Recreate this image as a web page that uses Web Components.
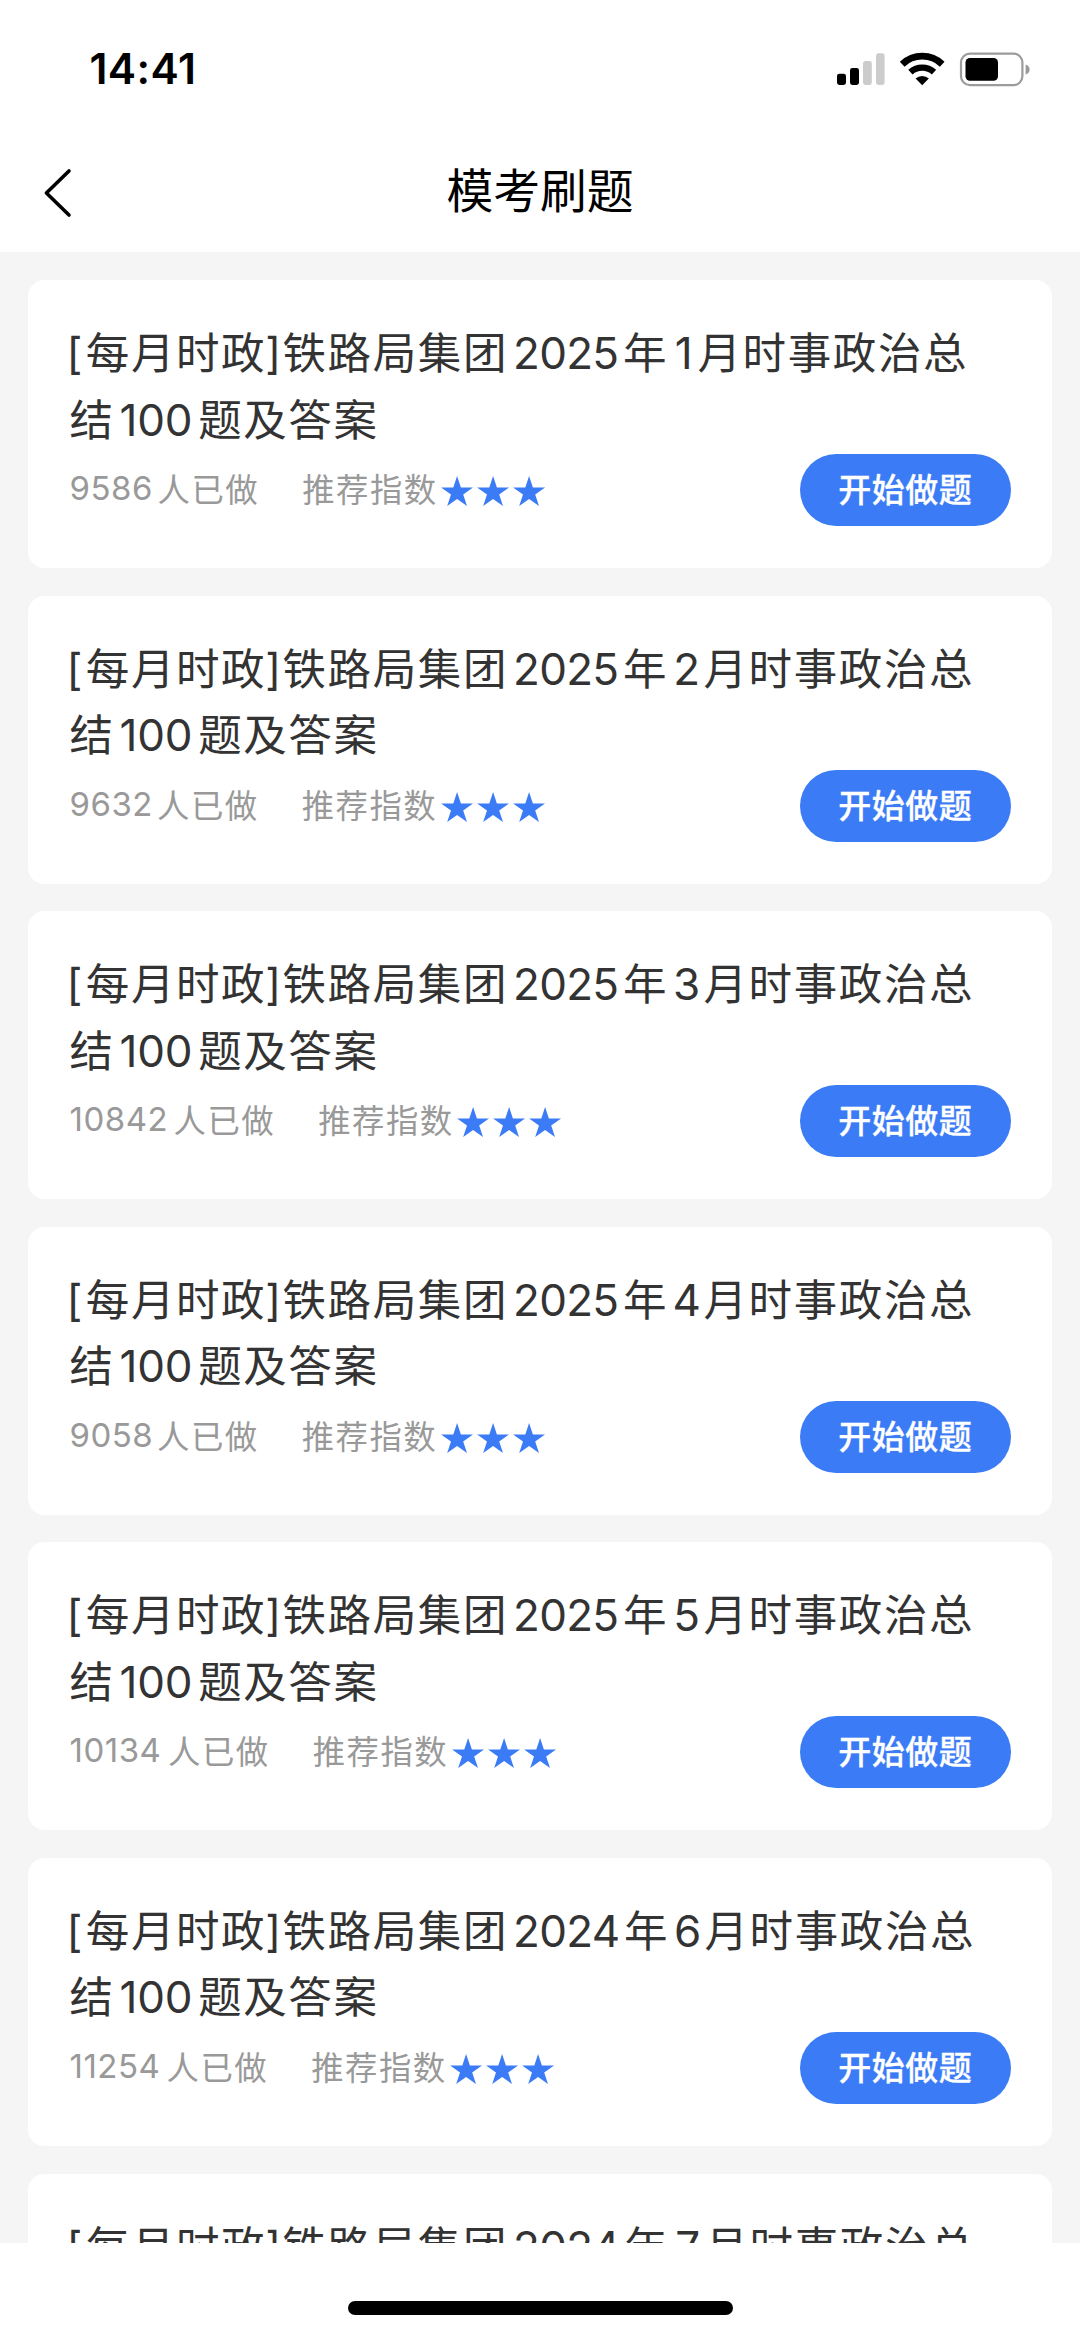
<!DOCTYPE html>
<html lang="zh-CN">
<head>
<meta charset="utf-8">
<title>模考刷题</title>
<style>
html,body{margin:0;padding:0;height:2337px;overflow:hidden;background:#fff}
body{font-family:Inter,"Noto Sans CJK SC",sans-serif}
</style>
</head>
<body>
<mock-exam-app></mock-exam-app>
<script>
const define = (name, html) => customElements.define(name, class extends HTMLElement {
  connectedCallback() {
    if (this.shadowRoot) return;
    const root = this.attachShadow({ mode: 'open' });
    root.innerHTML = typeof html === 'function' ? html(this) : html;
  }
});

define('status-bar', `
<style>
:host{display:flex;height:137px;box-sizing:border-box;padding:0 50px 0 89.5px;justify-content:space-between;align-items:center}
time{font:600 42.5px/60px Inter,sans-serif;letter-spacing:.4px;color:#000}
svg{display:block;width:194px;height:36px}
</style>
<time>14:41</time>
<svg viewBox="836 50 194 36">
  <rect x="837" y="72.7" width="9" height="11.3" rx="2.4"/>
  <rect x="850" y="67" width="9" height="17" rx="2.4"/>
  <rect x="863" y="60" width="8.8" height="24" rx="2.4" fill="#ccc"/>
  <rect x="876" y="52.3" width="8.6" height="31.7" rx="2.4" fill="#ccc"/>
  <g fill="none" stroke="#000">
    <path d="M902.2 63.2A29 29 0 0 1 942.2 63.2" stroke-width="6.8"/>
    <path d="M910.4 71.2A17.6 17.6 0 0 1 934 71.2" stroke-width="6.4"/>
  </g>
  <path d="M915.6 77.6A9.8 9.8 0 0 1 928.8 77.6L922.2 84.2Z"/>
  <rect x="961" y="52.6" width="61.4" height="31.6" rx="9" fill="none" stroke="#9c9c9c" stroke-width="2.2"/>
  <rect x="965.5" y="57" width="32.5" height="22.8" rx="4.5"/>
  <path d="M1025.6 63.4Q1029.6 64.8 1029.6 68.4T1025.6 73.4Z" fill="#999"/>
</svg>`);

define('nav-bar', `
<style>
:host{display:grid;grid-template-columns:108px 1fr 108px;height:115px;align-items:center}
svg{display:block;width:30px;height:52px;margin:-4px 0 0 43px}
h1{margin:0;padding-bottom:14px;text-align:center;font:400 46.8px/60px "Noto Sans CJK SC",sans-serif;color:#000}
</style>
<svg viewBox="0 0 30 52" fill="none" stroke="#000" stroke-width="3.6" stroke-linecap="round" stroke-linejoin="round"><path d="M26 4L3.4 26L26 48"/></svg>
<h1><slot></slot></h1>`);

define('start-button', `
<style>
:host{display:block}
button{display:block;border:0;padding:0 0 3px;width:210.5px;height:72px;border-radius:36px;background:#3b7cf6;color:#fff;
font:500 33px/69px "Noto Sans CJK SC",sans-serif;letter-spacing:.5px;text-align:center;-webkit-text-stroke:.3px #fff}
</style>
<button><slot></slot></button>`);

define('star-rating', el => `
<style>
:host{display:flex;gap:3.9px;height:30px}
svg{display:block;width:32.2px;height:30px;fill:#3b7cf6}
</style>
${'<svg viewBox="0 0 32 30"><path d="M16 0L19.8 11.5H32L22.1 18.6L25.9 30L16 22.9L6.1 30L9.9 18.6L0 11.5H12.2Z"/></svg>'.repeat(+el.getAttribute('count'))}`);

define('exam-card', el => {
  const a = n => el.getAttribute(n);
  return `
<style>
:host{display:block;box-sizing:border-box;height:288px;flex:none;border-radius:16.6px;background:#fff;padding:38px 41.5px 0;color:#333}
h2{margin:0;font:400 43.5px/66.5px "Noto Sans CJK SC",sans-serif;color:#333;white-space:nowrap}
h2 span{line-height:0}
.t{letter-spacing:1.6px}
.b{display:inline-block;width:16.3px;font-family:Inter,sans-serif;text-indent:-3px}
.e{text-indent:-1px}
.n{display:inline-block;font-family:Inter,sans-serif;font-size:44px;letter-spacing:-.3px}
.y{margin:0 4.5px 0 5px;letter-spacing:-.7px}
.m{width:${a('month') === '1' ? 25 : 31}px;text-align:center;margin:0 1.5px 0 3px}
.h{margin:0 6px 0 5px}
.foot{display:flex;align-items:center;height:72px;margin-top:3px;color:#999;font:400 32.4px/48px "Noto Sans CJK SC",sans-serif;letter-spacing:1.5px;white-space:nowrap}
.foot>span{margin-top:-4px}
.c{font-family:Inter,sans-serif;font-size:33px;width:${a('cw')}px;letter-spacing:.5px}
.r{margin-left:43px}
star-rating{margin:2px 0 0 3.5px}
start-button{margin-left:auto}
</style>
<h2><span class="b">[</span><span class="t">每月时政</span><span class="b e">]</span><span class="t">铁路局集团</span><span class="n y">${a('year')}</span><span class="t">年</span><span class="n m">${a('month')}</span><span class="t">月时事政治总</span><br><span class="t">结</span><span class="n h">100</span><span class="t">题及答案</span></h2>
<div class="foot"><span class="c">${a('done')}</span><span>人已做</span><span class="r">推荐指数</span><star-rating count="3"></star-rating><start-button>开始做题</start-button></div>`;
});

define('home-indicator', `
<style>
:host{display:flex;height:94px;justify-content:center;align-items:flex-start;background:#fff}
div{width:385px;height:13.7px;border-radius:7px;background:#000;margin-top:58px}
</style><div></div>`);

define('mock-exam-app', () => {
  const rows = [[2025,1,9586,88],[2025,2,9632,87.5],[2025,3,10842,104],[2025,4,9058,87.5],[2025,5,10134,98.5],[2024,6,11254,97],[2024,7,10368,103]];
  return `
<style>
:host{display:flex;flex-direction:column;width:1080px;height:2337px}
main{flex:1;min-height:0;overflow:hidden;background:#f5f5f5;display:flex;flex-direction:column;gap:27.6px;padding:28px 28px 0}
</style>
<status-bar></status-bar>
<nav-bar>模考刷题</nav-bar>
<main>${rows.map(r => `<exam-card year="${r[0]}" month="${r[1]}" done="${r[2]}" cw="${r[3]}"></exam-card>`).join('')}</main>
<home-indicator></home-indicator>`;
});
</script>
</body>
</html>
